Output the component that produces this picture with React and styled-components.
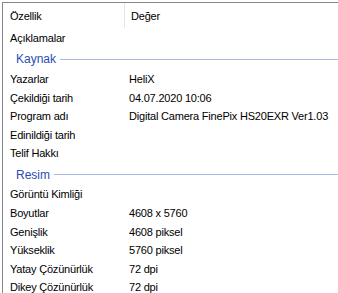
import React from "react";
import styled, { createGlobalStyle } from "styled-components";

const GlobalStyle = createGlobalStyle`
  html, body {
    margin: 0;
    padding: 0;
    background: #fff;
    overflow: hidden;
  }
  body {
    font-family: "Liberation Sans", Arial, sans-serif;
    color: #000;
  }
`;

const Panel = styled.div`
  margin: 2px 0 0 2px;
  height: 300px;
  border-top: 1px solid #828790;
  border-left: 1px solid #828790;
  background: #fff;
`;

const Header = styled.div`
  display: grid;
  grid-template-columns: 121px 1fr;
  height: 25.7px;
`;

const HeaderCell = styled.div`
  display: flex;
  align-items: center;
  padding-left: ${(p) => (p.$first ? "7px" : "6px")};
  font-size: 11px;
  letter-spacing: -0.2px;
  border-left: ${(p) => (p.$first ? "none" : "1px solid #e5e5e5")};
  height: 24px;
  padding-top: 1px;
`;

const Row = styled.div`
  display: grid;
  grid-template-columns: 119px 1fr;
  height: 18.6px;
  align-items: center;
  font-size: 11px;
  letter-spacing: -0.2px;
  white-space: nowrap;
`;

const Label = styled.span`
  padding-left: 7px;
`;

const Value = styled.span`
  padding-left: 7px;
`;

const Group = styled.div`
  display: flex;
  align-items: center;
  gap: 4px;
  height: 22.4px;
  padding-left: 13px;
  padding-top: 2px;
  box-sizing: border-box;
  font-size: 12px;
  color: #2a4cb3;
`;

const GroupLine = styled.div`
  flex: 1;
  height: 1px;
  background: #a9b8e2;
`;

const sections = [
  {
    title: null,
    rows: [["Açıklamalar", ""]],
  },
  {
    title: "Kaynak",
    rows: [
      ["Yazarlar", "HeliX"],
      ["Çekildiği tarih", "04.07.2020 10:06"],
      ["Program adı", "Digital Camera FinePix HS20EXR Ver1.03"],
      ["Edinildiği tarih", ""],
      ["Telif Hakkı", ""],
    ],
  },
  {
    title: "Resim",
    rows: [
      ["Görüntü Kimliği", ""],
      ["Boyutlar", "4608 x 5760"],
      ["Genişlik", "4608 piksel"],
      ["Yükseklik", "5760 piksel"],
      ["Yatay Çözünürlük", "72 dpi"],
      ["Dikey Çözünürlük", "72 dpi"],
    ],
  },
];

export default function App() {
  return (
    <>
      <GlobalStyle />
      <Panel>
        <Header>
          <HeaderCell $first>Özellik</HeaderCell>
          <HeaderCell>Değer</HeaderCell>
        </Header>
        {sections.map((s, i) => (
          <React.Fragment key={i}>
            {s.title && (
              <Group>
                {s.title}
                <GroupLine />
              </Group>
            )}
            {s.rows.map(([k, v]) => (
              <Row key={k}>
                <Label>{k}</Label>
                <Value>{v}</Value>
              </Row>
            ))}
          </React.Fragment>
        ))}
      </Panel>
    </>
  );
}
